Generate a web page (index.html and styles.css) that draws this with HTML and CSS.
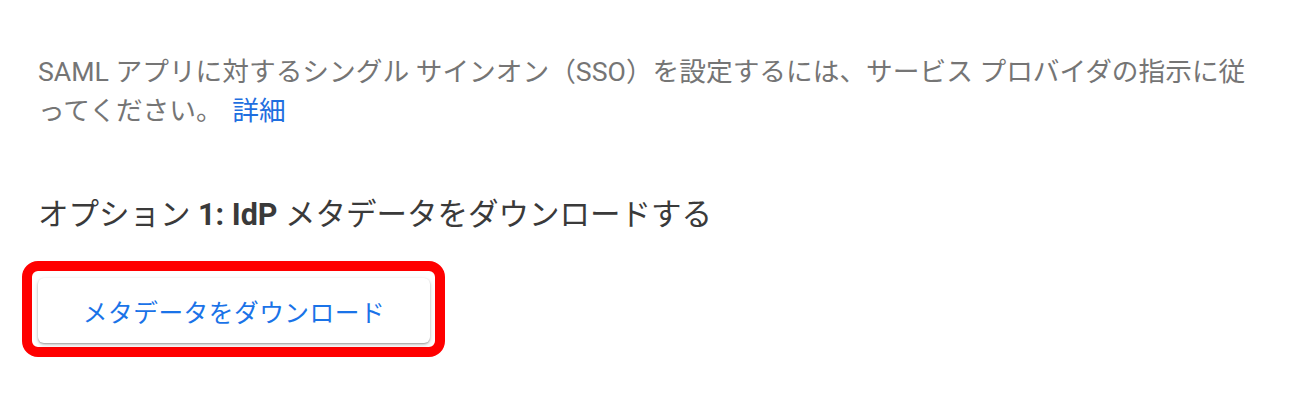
FILE: index.html
```html
<!DOCTYPE html>
<html lang="ja">
<head>
<meta charset="utf-8">
<link rel="stylesheet" href="styles.css">
</head>
<body>
<main class="page">
  <p class="desc">SAML アプリに対するシングル サインオン（SSO）を設定するには、サービス プロバイダの指示に従ってください。 <a class="link" href="#">詳細</a></p>
  <h2 class="option">オプション <b>1: IdP</b> メタデータをダウンロードする</h2>
  <div class="highlight">
    <button class="btn" type="button">メタデータをダウンロード</button>
  </div>
</main>
</body>
</html>
```

FILE: styles.css
```css
html, body {
  margin: 0;
  padding: 0;
  background: #ffffff;
}
.page {
  padding: 53px 28px 0 38px;
  font-family: Roboto, "Noto Sans CJK JP", sans-serif;
}
.desc {
  margin: 0;
  font-size: 26.7px;
  line-height: 39px;
  color: #757575;
}
.link {
  margin-left: 3px;
  color: #1f6fe0;
  text-decoration: none;
}
.option {
  margin: 62px 0 0 0;
  font-size: 30.5px;
  line-height: 44px;
  font-weight: 400;
  color: #3a3a3a;
}
.option b {
  font-weight: 700;
}
.highlight {
  display: inline-block;
  margin: 24px 0 0 -16px;
  padding: 7px 5px 4px 6px;
  border: 10px solid #ff0000;
  border-radius: 16px;
}
.btn {
  display: block;
  width: 392px;
  height: 65px;
  border: none;
  border-radius: 6px;
  background: #ffffff;
  box-shadow: 0 1px 2px rgba(0,0,0,0.3), 0 2px 5px rgba(0,0,0,0.15);
  font-family: Roboto, "Noto Sans CJK JP", sans-serif;
  font-size: 24.7px;
  color: #1a73e8;
  letter-spacing: 0.5px;
}
```
